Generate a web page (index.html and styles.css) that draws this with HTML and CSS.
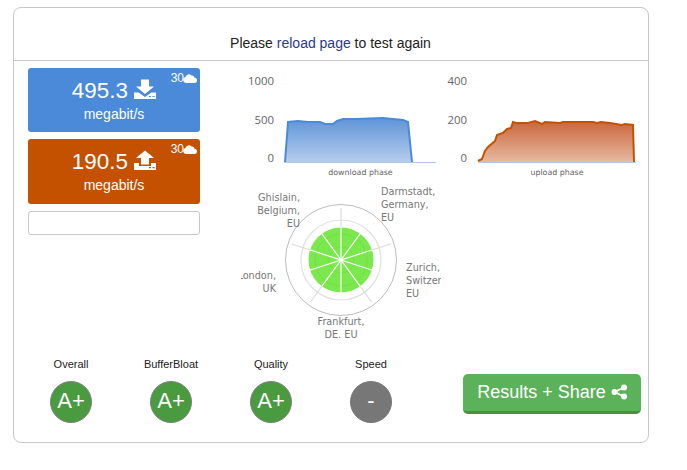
FILE: index.html
```html
<!DOCTYPE html>
<html lang="en">
<head>
<meta charset="utf-8">
<title>Speed test</title>
<link rel="stylesheet" href="styles.css">
</head>
<body>
<main class="panel">
  <header class="panel-head">Please <a class="reload" href="#">reload page</a> to test again</header>
  <section class="top">
    <div class="speeds">
      <div class="speed speed-down">
        <span class="streams">30<svg class="cloud" viewBox="0 0 14 9"><path d="M3 9A3 3 0 0 1 2.4 3.1 3.6 3.6 0 0 1 8.6 1.6 2.5 2.5 0 0 1 11.400 3.600 2.7 2.700 0 0 1 11.200 9Z"/></svg></span>
        <div class="speed-value">495.3 <svg class="glyph" viewBox="0 0 22 19"><path d="M7 0H15V7H20L11 14.500 2 7H7Z"/><path fill-rule="evenodd" d="M0 13H4.500L11 17.500 17.500 13H22V19.500H0ZM15 16.500V17.500H17V16.500ZM18.500 16.500V17.500H20.500V16.500Z"/></svg></div>
        <div class="speed-unit">megabit/s</div>
      </div>
      <div class="speed speed-up">
        <span class="streams">30<svg class="cloud" viewBox="0 0 14 9"><path d="M3 9A3 3 0 0 1 2.4 3.1 3.6 3.6 0 0 1 8.6 1.6 2.5 2.5 0 0 1 11.400 3.600 2.7 2.700 0 0 1 11.200 9Z"/></svg></span>
        <div class="speed-value">190.5 <svg class="glyph" viewBox="0 0 22 19"><path d="M11 0 20 7.500H15V14H7V7.500H2Z"/><path fill-rule="evenodd" d="M0 12.500H5V15.500H17V12.500H22V19.500H0ZM15 16.500V17.800H17V16.500ZM18.500 16.500V17.800H20.500V16.500Z"/></svg></div>
        <div class="speed-unit">megabit/s</div>
      </div>
      <div class="progress"></div>
    </div>
    <div class="graphs">
      <div class="charts">
        <svg class="chart" viewBox="241 61 200 120">
          <defs>
            <linearGradient id="blueFill" x1="0" y1="0" x2="0" y2="1"><stop offset="0" stop-color="#5e94d8"/><stop offset="1" stop-color="#b7cdec"/></linearGradient>
            <linearGradient id="redFill" x1="0" y1="0" x2="0" y2="1"><stop offset="0" stop-color="#c8663a"/><stop offset="1" stop-color="#e8b9a2"/></linearGradient>
          </defs>
          <g class="axis-label">
            <text x="274" y="85">1000</text><text x="274" y="124">500</text><text x="274" y="162">0</text>
          </g>
          <path class="area-blue" d="M285 162L288 122 298 121 308 122 320 122 325 124 333 124 337 121 343 119 355 119 383 118 393 119 403 120 408 122 412 162Z"/>
          <line class="baseline" x1="284" y1="162.500" x2="436" y2="162.500"/>
          <polyline class="line-blue" points="285,162 288,122 298,121 308,122 320,122 325,124 333,124 337,121 343,119 355,119 383,118 393,119 403,120 408,122 412,162"/>
          <text class="phase" x="360.500" y="175">download phase</text>
        </svg>
        <svg class="chart" viewBox="441 61 200 120">
          <g class="axis-label">
            <text x="467" y="85">400</text><text x="467" y="124">200</text><text x="467" y="162">0</text>
          </g>
          <path class="area-red" d="M478 162L482 159 485 151 488 147 495 141 497 135 503 133 507 129 511 128 513 122 516 123 528 123 535 121 542 124 545 122 560 123 563 122 583 122 593 122 597 123 601 122 610 123 622 125 625 124 633 125 634 162Z"/>
          <line class="baseline" x1="478" y1="162.500" x2="636" y2="162.500"/>
          <polyline class="line-red" points="478,161 482,159 485,151 488,147 495,141 497,135 503,133 507,129 511,128 513,122 516,123 528,123 535,121 542,124 545,122 560,123 563,122 583,122 593,122 597,123 601,122 610,123 622,125 625,124 633,125 634,162"/>
          <text class="phase" x="557" y="175">upload phase</text>
        </svg>
      </div>
      <svg class="radar" viewBox="241 181 200 165">
        <circle class="ring-outer" cx="341" cy="260" r="55.500"/>
        <circle class="ring" cx="341" cy="260" r="40"/>
        <g class="spokes">
          <line x1="341" y1="260" x2="341" y2="208"/>
          <line x1="341" y1="260" x2="390.500" y2="244"/>
          <line x1="341" y1="260" x2="371.600" y2="302"/>
          <line x1="341" y1="260" x2="310.400" y2="302"/>
          <line x1="341" y1="260" x2="291.500" y2="244"/>
        </g>
        <circle class="slice" cx="341" cy="260" r="32.500"/>
        <circle class="ring-faint" cx="341" cy="260" r="26"/>
        <circle class="ring-faint" cx="341" cy="260" r="13"/>
        <g class="slice-lines">
          <line x1="341" y1="227" x2="341" y2="293"/>
          <line x1="360.400" y1="233.300" x2="321.600" y2="286.700"/>
          <line x1="372.400" y1="249.800" x2="309.600" y2="270.200"/>
          <line x1="372.400" y1="270.200" x2="309.600" y2="249.800"/>
          <line x1="360.400" y1="286.700" x2="321.600" y2="233.300"/>
        </g>
        <g class="radar-label">
          <text class="end" x="300" y="201">Ghislain,</text><text class="end" x="300" y="214">Belgium,</text><text class="end" x="300" y="227">EU</text>
          <text x="381" y="195">Darmstadt,</text><text x="381" y="208">Germany,</text><text x="381" y="221">EU</text>
          <text x="406" y="271">Zurich,</text><text x="406" y="284">Switzerland,</text><text x="406" y="297">EU</text>
          <text class="mid" x="341" y="325">Frankfurt,</text><text class="mid" x="341" y="338">DE. EU</text>
          <text class="end" x="276" y="279">London,</text><text class="end" x="276" y="292">UK</text>
        </g>
      </svg>
    </div>
  </section>
  <section class="bottom">
    <div class="grades">
      <div class="grade"><div class="grade-name">Overall</div><div class="grade-badge good">A+</div></div>
      <div class="grade"><div class="grade-name">BufferBloat</div><div class="grade-badge good">A+</div></div>
      <div class="grade"><div class="grade-name">Quality</div><div class="grade-badge good">A+</div></div>
      <div class="grade"><div class="grade-name">Speed</div><div class="grade-badge none">-</div></div>
    </div>
    <a class="share" href="#">Results + Share <svg class="share-icon" viewBox="0 0 16 16"><circle cx="13" cy="3.500" r="3"/><circle cx="3.500" cy="8" r="3"/><circle cx="13" cy="12.500" r="3"/><path d="M13 3.500L3.500 8 13 12.500" fill="none" stroke="#fff" stroke-width="1.800"/></svg></a>
  </section>
</main>
</body>
</html>
```
FILE: styles.css
```css
html, body { margin: 0; padding: 0; background: #fff; }
body { font-family: "Liberation Sans", Arial, sans-serif; color: #222; }
.panel { box-sizing: border-box; width: 636px; height: 436px; margin: 7px 0 0 13px; border: 1px solid #c8c8c8; border-radius: 8px; }
.panel-head { box-sizing: border-box; height: 53px; padding: 27px 1px 0 0; border-bottom: 1px solid #c8c8c8; font-size: 14px; line-height: 16px; text-align: center; }
.reload { color: #2b3a8f; text-decoration: none; }
.top { display: flex; height: 286px; }
.speeds { display: flex; flex-direction: column; gap: 7px; width: 172px; margin: 7px 0 0 14px; }
.speed { position: relative; box-sizing: border-box; height: 64px; border-radius: 3px; color: #fff; text-align: center; }
.speed-up { height: 65px; background: #c45100; }
.speed-down { background: #4a8ad9; }
.speed-value { font-size: 22.4px; line-height: 26px; padding-top: 10px; }
.speed-unit { font-size: 14px; line-height: 16px; margin-top: 2px; }
.glyph { width: 22px; height: 20px; fill: #fff; vertical-align: -1px; }
.streams { position: absolute; top: 3px; right: 3px; display: flex; align-items: center; font-size: 12px; line-height: 14px; }
.cloud { width: 14px; height: 9px; margin-left: -1px; fill: #fff; }
.progress { box-sizing: border-box; height: 24px; border: 1px solid #c8c8c8; border-radius: 3px; }
.graphs { width: 400px; margin-left: 41px; }
.charts { display: flex; }
.chart { display: block; width: 200px; height: 120px; overflow: hidden; }
.radar { display: block; width: 200px; height: 165px; overflow: hidden; }
.axis-label text { font: 11.400px "Open Sans", "DejaVu Sans", sans-serif; fill: #666; text-anchor: end; }
.phase { font: 7.900px "DejaVu Sans", sans-serif; fill: #666; text-anchor: middle; }
.area-blue { fill: url(#blueFill); }
.area-red { fill: url(#redFill); }
.baseline { stroke: #b3c6e4; stroke-width: 1; }
.line-blue { fill: none; stroke: #4a8ad9; stroke-width: 2; }
.line-red { fill: none; stroke: #c45100; stroke-width: 2; }
.ring-outer { fill: #fff; stroke: #bdbdbd; stroke-width: 1; }
.ring { fill: none; stroke: #e0e0e0; stroke-width: 1.200; }
.spokes line { stroke: #dcdcdc; stroke-width: 1.200; }
.slice { fill: #7be84e; }
.ring-faint { fill: none; stroke: #74de48; stroke-width: 1; }
.slice-lines line { stroke: #fff; stroke-width: 1.200; }
.radar-label text { font: 9.700px "DejaVu Sans", sans-serif; fill: #777; }
.radar-label .end { text-anchor: end; }
.radar-label .mid { text-anchor: middle; }
.bottom { display: flex; align-items: flex-start; padding-top: 10px; }
.grades { display: flex; margin-left: 7px; }
.grade { display: flex; flex-direction: column; align-items: center; width: 100px; }
.grade-name { font-size: 11px; line-height: 14px; height: 15px; color: #222; }
.grade-badge { box-sizing: border-box; width: 42px; height: 42px; margin-top: 9px; border-radius: 50%; border: 1px solid #808080; color: #fff; font-size: 22px; line-height: 38px; text-align: center; }
.good { background: #4a9a3f; }
.none { background: #777; border-color: #777; }
.share { box-sizing: border-box; display: block; width: 178px; height: 40px; margin: 17px 0 0 42px; padding-top: 7px; background: #5cb25a; border-bottom: 3px solid #4a8f3f; border-radius: 5px; color: #fff; font-size: 18px; line-height: 22px; text-align: center; text-decoration: none; white-space: nowrap; }
.share-icon { width: 16px; height: 16px; fill: #fff; vertical-align: -2px; }
```
